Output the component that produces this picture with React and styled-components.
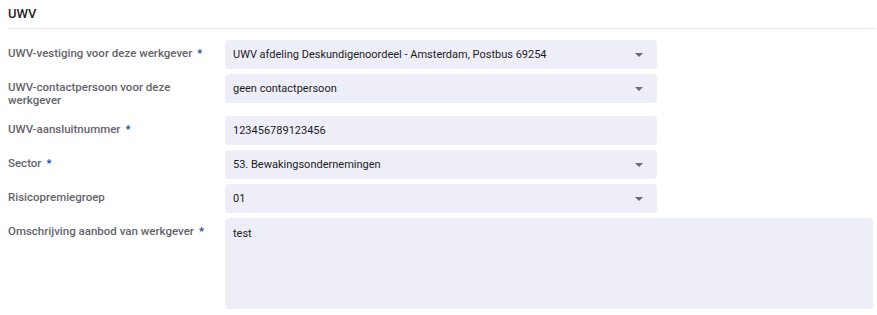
import React from 'react'
import styled, { createGlobalStyle } from 'styled-components';

const GlobalStyle = createGlobalStyle`
    body {
        margin: 0;
        background: #fff;
        font-family: Roboto, "Liberation Sans", sans-serif;
    }
`;

const fields = [
    { label: 'UWV-vestiging voor deze werkgever', required: true, value: 'UWV afdeling Deskundigenoordeel - Amsterdam, Postbus 69254', type: 'select' },
    { label: 'UWV-contactpersoon voor deze werkgever', value: 'geen contactpersoon', type: 'select' },
    { label: 'UWV-aansluitnummer', required: true, value: '123456789123456', type: 'input' },
    { label: 'Sector', required: true, value: '53. Bewakingsondernemingen', type: 'select' },
    { label: 'Risicopremiegroep', value: '01', type: 'select' },
    { label: 'Omschrijving aanbod van werkgever', required: true, value: 'test', type: 'textarea' },
]

function Caret() {
    return (
        <CaretIcon width="8" height="4" viewBox="0 0 8 4">
            <path d="M0 0 L8 0 L4 4 Z" fill="#6b6b75" />
        </CaretIcon>
    )
}

function App() {
  return (
    <Section>
        <GlobalStyle />
        <Title>UWV</Title>
        <Divider />
        <Form>
            {fields.map(f => (
                <Row key={f.label}>
                    <Label>
                        {f.label}
                        {f.required && <Star>*</Star>}
                    </Label>
                    {f.type === 'textarea' ? (
                        <TextArea>{f.value}</TextArea>
                    ) : (
                        <Field>
                            <span>{f.value}</span>
                            {f.type === 'select' && <Caret />}
                        </Field>
                    )}
                </Row>
            ))}
        </Form>
    </Section>
  )
}

export default App


const Section = styled.div`
    padding: 6px 1px 0 8px;
`;

const Title = styled.h3`
    margin: 0;
    font-size: 13px;
    font-weight: 500;
    color: #1f1f24;
    line-height: 15px;
`;

const Divider = styled.div`
    height: 1px;
    background: #e8e8f4;
    margin-top: 7px;
`;

const Form = styled.div`
    display: flex;
    flex-direction: column;
    gap: 5px;
    margin-top: 11px;
`;

const Row = styled.div`
    display: grid;
    grid-template-columns: 217px 1fr;
    align-items: start;
`;

const Label = styled.div`
    font-size: 11.5px;
    font-weight: 500;
    line-height: 13px;
    color: #64646c;
    padding: 7px 10px 4px 0;
`;

const Star = styled.span`
    color: #1b3f9e;
    margin-left: 5px;
`;

const Field = styled.div`
    width: 432px;
    height: 29px;
    box-sizing: border-box;
    background: #eeeef8;
    border-radius: 4px;
    display: flex;
    align-items: center;
    justify-content: space-between;
    padding: 0 14px 0 8px;
    font-size: 11px;
    color: #1c1c1c;
`;

const CaretIcon = styled.svg`
    display: block;
`;

const TextArea = styled.div`
    width: 648px;
    height: 91px;
    box-sizing: border-box;
    background: #eeeef8;
    border-radius: 4px;
    padding: 9px 8px;
    font-size: 11px;
    color: #1c1c1c;
`;
